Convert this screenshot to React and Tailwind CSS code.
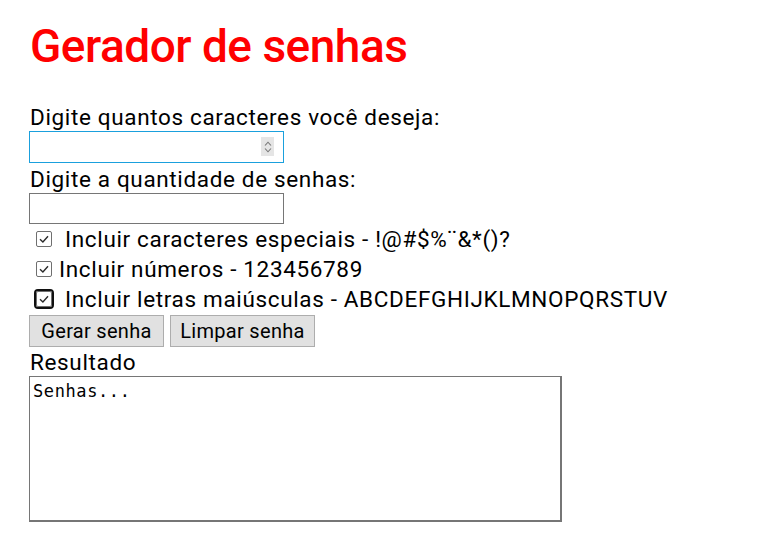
import React from "react";

function Check({ focus }) {
  const box = (
    <span className="inline-flex items-center justify-center w-[16px] h-[16px] rounded-[2px] border border-[#6f6f6f] bg-white">
      <svg width="12" height="12" viewBox="0 0 12 12">
        <path d="M2 6.2 L4.9 9 L10 3.2" fill="none" stroke="#2a2a2a" strokeWidth="1.4" />
      </svg>
    </span>
  );
  if (focus)
    return (
      <span className="inline-flex items-center justify-center w-[20px] h-[20px] rounded-[4px] border-2 border-[#101010] bg-white">
        {box}
      </span>
    );
  return box;
}

export default function App() {
  const font = { fontFamily: "Roboto, 'Noto Sans', sans-serif" };
  return (
    <div className="min-h-[557px] bg-white text-black pl-[29px]" style={font}>
      <h1 className="text-[46px] leading-[56px] font-medium text-[#ff0000] pt-[18px] pl-[1px] tracking-[-0.5px]">Gerador de senhas</h1>
      <div className="mt-[30px] text-[22.5px] leading-[26px] tracking-[0.65px]">
        <div className="pl-[1px]">Digite quantos caracteres você deseja:</div>
        <div className="relative mt-[1px] w-[255px] h-[32px] border border-[#1aa0dd] bg-white">
          <div className="absolute right-[9px] top-[5px] w-[13px] h-[19px] bg-[#e5e5e5] flex flex-col items-center justify-center gap-[2px]">
            <svg width="8" height="5" viewBox="0 0 8 5"><path d="M1 4.5 L4 1.2 L7 4.5" fill="none" stroke="#777" strokeWidth="1.1" /></svg>
            <svg width="8" height="5" viewBox="0 0 8 5"><path d="M1 0.5 L4 3.8 L7 0.5" fill="none" stroke="#777" strokeWidth="1.1" /></svg>
          </div>
        </div>
        <div className="pl-[1px] mt-[3px]">Digite a quantidade de senhas:</div>
        <div className="mt-[1px] w-[255px] h-[31px] border border-[#767676] bg-white"></div>
        <div className="flex flex-col">
          <div className="h-[30px] flex items-center pl-[7px]">
            <Check />
            <span className="ml-[13px]">Incluir caracteres especiais - !@#$%¨&amp;*()?</span>
          </div>
          <div className="h-[30px] flex items-center pl-[7px]">
            <Check />
            <span className="ml-[7px]">Incluir números - 123456789</span>
          </div>
          <div className="h-[30px] flex items-center pl-[5px]">
            <Check focus />
            <span className="ml-[11px]">Incluir letras maiúsculas - ABCDEFGHIJKLMNOPQRSTUV</span>
          </div>
        </div>
        <div className="flex gap-[6px] mt-[1px] tracking-[0.3px]">
          <button className="h-[32px] w-[135px] bg-[#e1e1e1] border border-[#adadad] text-[20px] text-black">Gerar senha</button>
          <button className="h-[32px] w-[145px] bg-[#e1e1e1] border border-[#adadad] text-[20px] text-black">Limpar senha</button>
        </div>
        <div className="pl-[1px] mt-[2px]">Resultado</div>
        <textarea
          readOnly
          value="Senhas..."
          className="block mt-[1px] w-[533px] h-[146px] border-t border-l border-r-2 border-b-2 border-[#767676] px-[3px] pt-[5px] text-[17px] leading-[19px] tracking-[0.6px] resize-none outline-none"
          style={{ fontFamily: "'DejaVu Sans Mono', 'Liberation Mono', monospace" }}
        />
      </div>
    </div>
  );
}
